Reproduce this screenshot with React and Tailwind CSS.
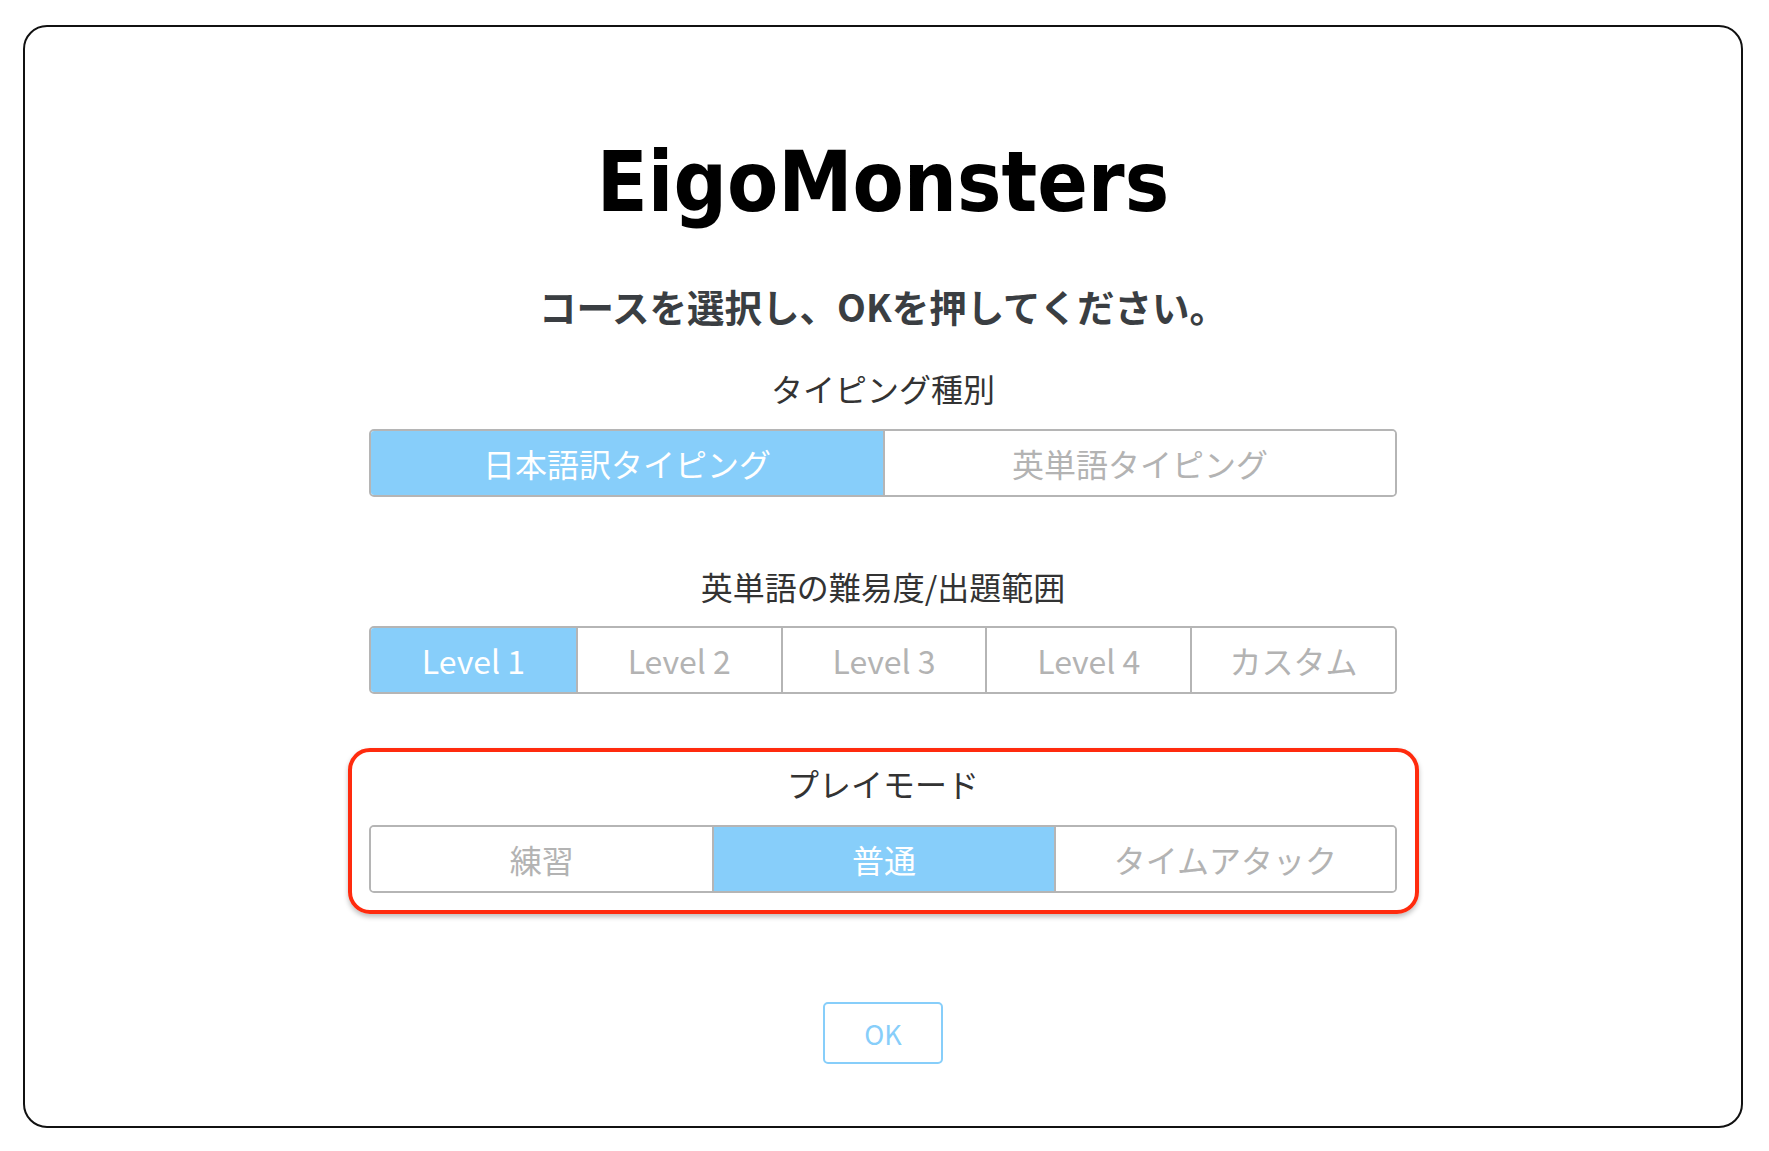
import React, { useState } from 'react';

const typingOptions = ['日本語訳タイピング', '英単語タイピング'];
const levelOptions = ['Level 1', 'Level 2', 'Level 3', 'Level 4', 'カスタム'];
const modeOptions = ['練習', '普通', 'タイムアタック'];

const gridCols = {
  2: 'grid-cols-2',
  3: 'grid-cols-3',
  5: 'grid-cols-5',
};

const Segmented = ({ options, value, onChange }) => (
  <div className={`grid ${gridCols[options.length]} w-[1028px] h-[68px] border-2 border-[#b5b5b5] rounded-[5px] overflow-hidden`}>
    {options.map((opt, i) => (
      <button
        key={opt}
        type="button"
        onClick={() => onChange(i)}
        className={`flex items-center justify-center text-[32px] leading-none ${i > 0 ? 'border-l-2 border-[#b5b5b5]' : ''} ${
          value === i ? 'bg-[#87cefa] text-white' : 'bg-white text-[#b3b3b3]'
        }`}
      >
        {opt}
      </button>
    ))}
  </div>
);

const App = () => {
  const [typing, setTyping] = useState(0);
  const [level, setLevel] = useState(0);
  const [mode, setMode] = useState(1);

  return (
    <div className="min-h-screen bg-white pt-[25px] pl-[23px]" style={{ fontFamily: '"Noto Sans CJK JP", "Noto Sans", sans-serif' }}>
      <div className="w-[1720px] h-[1103px] border-2 border-[#111] rounded-3xl flex flex-col items-center pt-[116px]">
        <h1
          className="text-[83px] leading-[80px] font-bold text-black"
          style={{ fontFamily: '"DejaVu Sans Condensed", "DejaVu Sans", sans-serif', fontStretch: 'condensed' }}
        >
          EigoMonsters
        </h1>

        <p className="mt-[64px] text-[37.5px] leading-[37px] font-bold text-[#3a3e42]">コースを選択し、OKを押してください。</p>

        {/* タイピング種別 */}
        <h2 className="mt-[48px] mb-[25px] text-[32px] leading-[32px] text-[#333]">タイピング種別</h2>
        <Segmented options={typingOptions} value={typing} onChange={setTyping} />

        {/* 難易度 */}
        <h2 className="mt-[73px] mb-[24px] text-[32px] leading-[32px] text-[#333]">英単語の難易度/出題範囲</h2>
        <Segmented options={levelOptions} value={level} onChange={setLevel} />

        {/* プレイモード */}
        <div className="mt-[54px] w-[1071px] border-4 border-[#ff2b0e] rounded-[22px] shadow-[0_3px_5px_rgba(0,0,0,0.25)] flex flex-col items-center pt-[15px] pb-[17px]">
          <h2 className="mb-[26px] text-[32px] leading-[32px] text-[#333]">プレイモード</h2>
          <Segmented options={modeOptions} value={mode} onChange={setMode} />
        </div>

        <button
          type="button"
          className="mt-[88px] w-[120px] h-[62px] border-2 border-[#87cefa] rounded-[5px] text-[27px] leading-none text-[#87cefa] bg-white"
        >
          OK
        </button>
      </div>
    </div>
  );
};

export default App;
